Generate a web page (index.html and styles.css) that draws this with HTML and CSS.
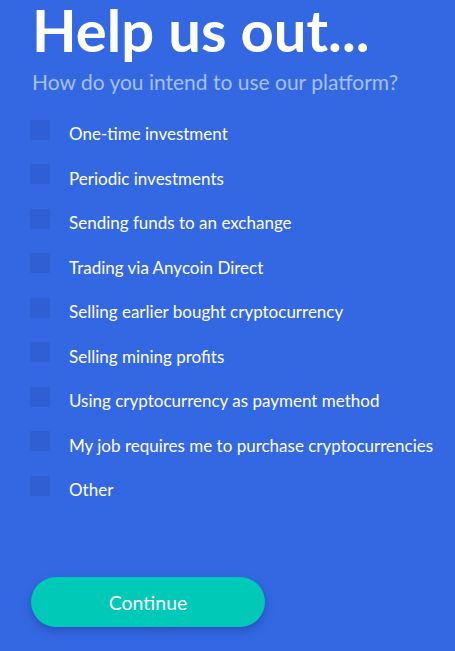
FILE: index.html
```html
<!DOCTYPE html>
<html>
<head>
<meta charset="utf-8">
<link rel="stylesheet" href="styles.css">
</head>
<body>
<main class="page">
  <h1 class="title">Help us out...</h1>
  <p class="subtitle">How do you intend to use our platform?</p>
  <ul class="options">
    <li class="option"><span class="box"></span><span class="label">One-time investment</span></li>
    <li class="option"><span class="box"></span><span class="label">Periodic investments</span></li>
    <li class="option"><span class="box"></span><span class="label">Sending funds to an exchange</span></li>
    <li class="option"><span class="box"></span><span class="label">Trading via Anycoin Direct</span></li>
    <li class="option"><span class="box"></span><span class="label">Selling earlier bought cryptocurrency</span></li>
    <li class="option"><span class="box"></span><span class="label">Selling mining profits</span></li>
    <li class="option"><span class="box"></span><span class="label">Using cryptocurrency as payment method</span></li>
    <li class="option"><span class="box"></span><span class="label">My job requires me to purchase cryptocurrencies</span></li>
    <li class="option"><span class="box"></span><span class="label">Other</span></li>
  </ul>
  <button class="continue">Continue</button>
</main>
</body>
</html>
```
FILE: styles.css
```css
html, body {
  margin: 0;
  padding: 0;
  background: #3468e3;
  height: 100%;
  overflow: hidden;
}
.page {
  font-family: Lato, "Open Sans", sans-serif;
  padding: 0 0 0 30px;
  display: flex;
  flex-direction: column;
  align-items: flex-start;
}
.title {
  margin: 0;
  padding: 0.6px 0 0 2px;
  font-size: 58px;
  line-height: 58px;
  font-weight: 700;
  color: #ffffff;
}
.subtitle {
  margin: 9.4px 0 0 2px;
  font-size: 21px;
  line-height: 28px;
  color: #a7c0f4;
}
.options {
  list-style: none;
  margin: 24px 0 0 0;
  padding: 0;
  display: flex;
  flex-direction: column;
}
.option {
  display: flex;
  align-items: flex-start;
  height: 44.5px;
}
.box {
  width: 20px;
  height: 20px;
  background: #2f5fd2;
  flex: none;
}
.label {
  margin: 4.4px 0 0 19px;
  font-size: 17px;
  line-height: 20px;
  color: #ffffff;
}
.continue {
  margin: 56.5px 0 0 1px;
  width: 234px;
  height: 50px;
  border: none;
  border-radius: 25px;
  background: #00c9b7;
  color: #ffffff;
  font-family: Lato, "Open Sans", sans-serif;
  font-size: 19.5px;
  padding: 2px 0 0 0;
  box-shadow: 0 4px 10px rgba(20, 40, 120, 0.35);
  cursor: pointer;
}
```
